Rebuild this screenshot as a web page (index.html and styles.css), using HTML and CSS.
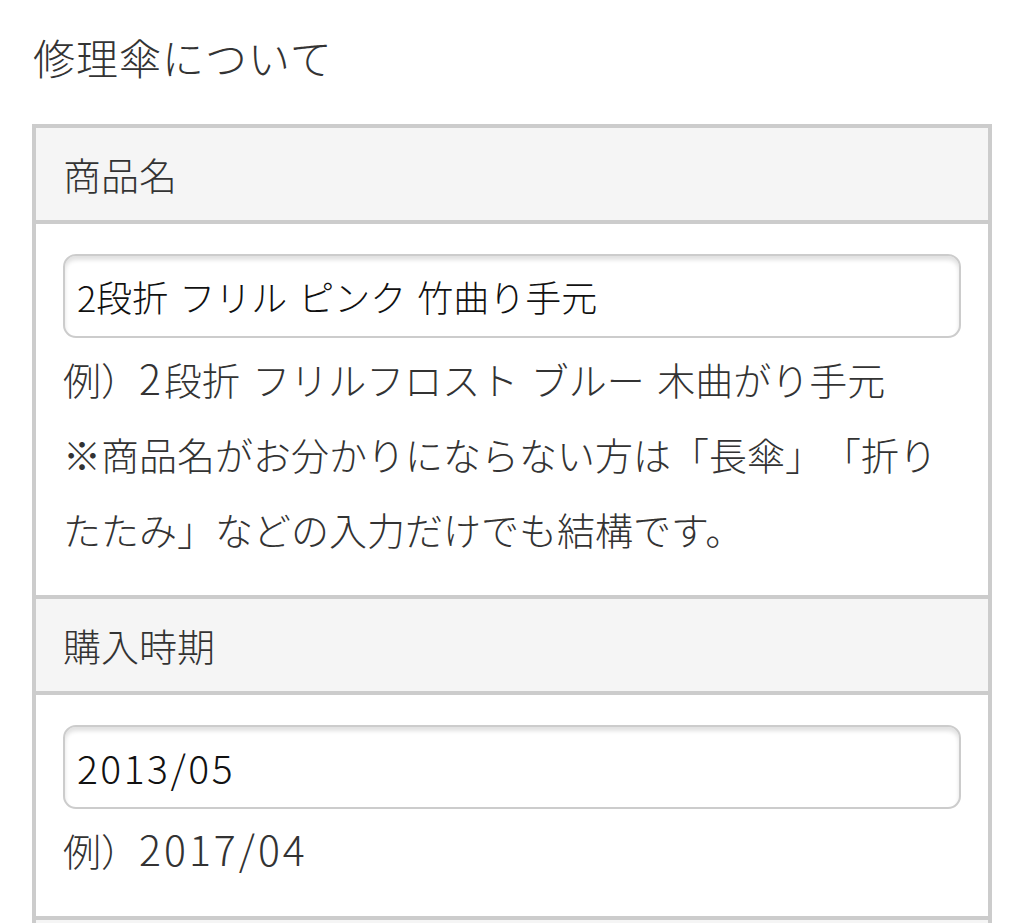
FILE: index.html
```html
<!DOCTYPE html>
<html lang="ja">
<head>
  <meta charset="UTF-8" />
  <meta name="viewport" content="width=device-width, initial-scale=1.0"/>
  <title>修理傘について</title>
  <link rel="stylesheet" href="styles.css">
</head>
<body>
  <section class="repair">
    <h2 class="repair-title">修理傘について</h2>

    <div class="form-box">
      <!-- 商品名 -->
      <div class="form-head">商品名</div>
      <div class="form-body">
        <input class="form-input" type="text" value="2段折 フリル ピンク 竹曲り手元">
        <p class="form-note">例）<span class="num">2</span>段折 フリルフロスト ブルー 木曲がり手元<br>※商品名がお分かりにならない方は「長傘」「折りたたみ」などの入力だけでも結構です。</p>
      </div>

      <!-- 購入時期 -->
      <div class="form-head">購入時期</div>
      <div class="form-body">
        <input class="form-input form-input-date" type="text" value="2013/05">
        <p class="form-note">例）<span class="num">2017/04</span></p>
      </div>

      <!-- 次の項目（画面外） -->
      <div class="form-head form-head-empty"></div>
    </div>
  </section>
</body>
</html>
```

FILE: styles.css
```css
* {
  margin: 0;
  padding: 0;
  box-sizing: border-box;
}
body {
  font-family: "Noto Sans CJK JP", "Noto Sans", sans-serif;
  font-weight: 300;
  background-color: #fff;
  color: #333;
  text-spacing-trim: space-all; /* 「」を全角のまま */
}

/* 修理傘について */
.repair {
  padding: 0 32px;
}
.repair-title {
  font-size: 42px;
  font-weight: 300;
  line-height: 60px;
  margin: 27px 0 37px;
  padding-left: 1px;
  letter-spacing: 1px;
}

/* フォーム枠 */
.form-box {
  border: 4px solid #ccc;
}
.form-head {
  background-color: #f5f5f5;
  font-size: 38px;
  line-height: 36px;
  padding: 28px 27px;
}
.form-head-empty {
  height: 92px;
}
.form-body {
  background-color: #fff;
  padding: 30px 27px 29px;
  border-top: 4px solid #ccc;
}
.form-body + .form-head {
  border-top: 4px solid #ccc;
}

.form-input {
  display: block;
  width: 100%;
  height: 84px;
  margin-bottom: 2px;
  padding: 0 12px;
  font-family: inherit;
  font-weight: 300;
  font-size: 36px;
  color: #111;
  background: #fff;
  border: 2px solid #ccc;
  border-radius: 13px;
  box-shadow: inset 0 4px 4px rgba(0, 0, 0, 0.12);
  outline: none;
  word-spacing: 3px;
}
.form-input-date {
  font-size: 39px;
  letter-spacing: 2.5px;
}

.form-note {
  font-size: 38px;
  line-height: 75px;
  word-spacing: 4px;
}
/* 数字は少し大きめ */
.num {
  font-size: 41px;
  letter-spacing: 3px;
}
```
